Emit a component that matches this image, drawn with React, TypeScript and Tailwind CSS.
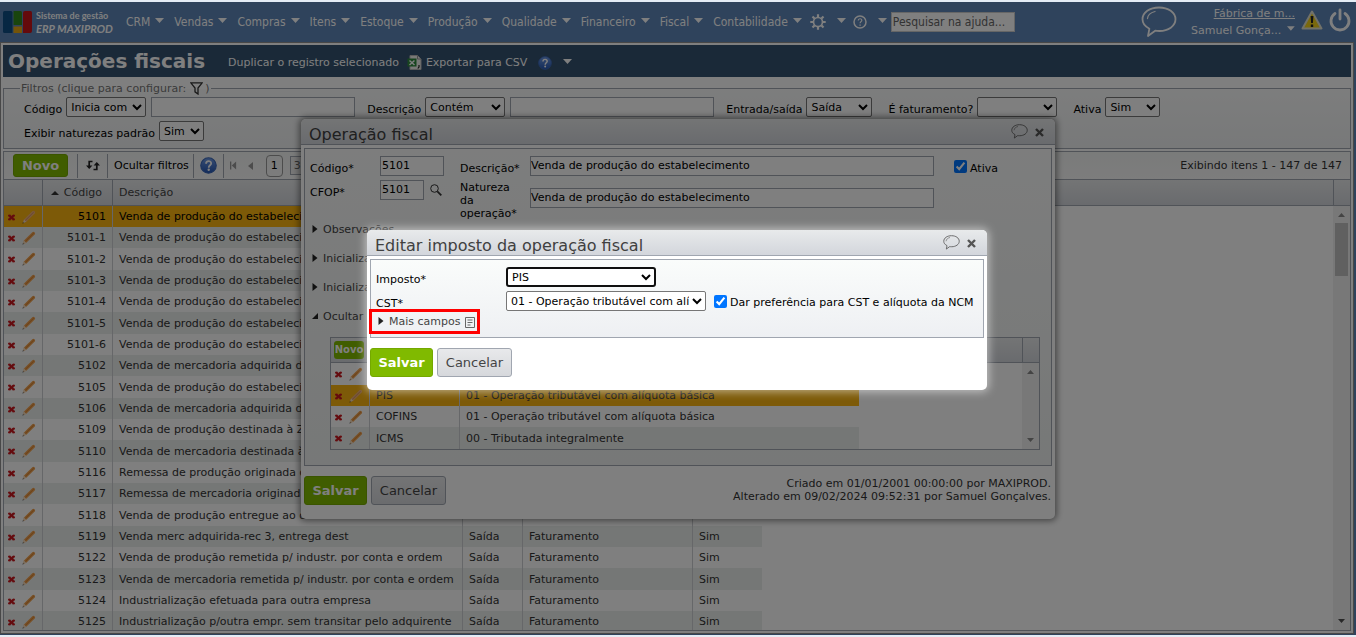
import React from "react";

const menus = ["CRM", "Vendas", "Compras", "Itens", "Estoque", "Produção", "Qualidade", "Financeiro", "Fiscal", "Contabilidade"];

const operations: [string, string][] = [
  ["5101", "Venda de produção do estabelecimento"],
  ["5101-1", "Venda de produção do estabelecimento"],
  ["5101-2", "Venda de produção do estabelecimento"],
  ["5101-3", "Venda de produção do estabelecimento"],
  ["5101-4", "Venda de produção do estabelecimento"],
  ["5101-5", "Venda de produção do estabelecimento"],
  ["5101-6", "Venda de produção do estabelecimento"],
  ["5102", "Venda de mercadoria adquirida de terceiros"],
  ["5105", "Venda de produção do estabelecimento"],
  ["5106", "Venda de mercadoria adquirida de terceiros"],
  ["5109", "Venda de produção destinada à Zona Franca"],
  ["5110", "Venda de mercadoria destinada à Zona Franca"],
  ["5116", "Remessa de produção originada de encomenda"],
  ["5117", "Remessa de mercadoria originada de encomenda"],
  ["5118", "Venda de produção entregue ao destinatário"],
  ["5119", "Venda merc adquirida-rec 3, entrega dest"],
  ["5122", "Venda de produção remetida p/ industr. por conta e ordem"],
  ["5123", "Venda de mercadoria remetida p/ industr. por conta e ordem"],
  ["5124", "Industrialização efetuada para outra empresa"],
  ["5125", "Industrialização p/outra empr. sem transitar pelo adquirente"],
];

const taxes: [string, string][] = [
  ["", ""],
  ["PIS", "01 - Operação tributável com alíquota básica"],
  ["COFINS", "01 - Operação tributável com alíquota básica"],
  ["ICMS", "00 - Tributada integralmente"],
];

const selectStyle = "h-5 rounded-[2px] border border-[#767676] bg-white text-black";
const inputStyle = "h-5 border border-[#a0a6b0] bg-white pb-px text-black outline-none";

function Caret({ className = "" }: { className?: string }) {
  return (
    <svg className={className} width="9" height="5" viewBox="0 0 9 5" aria-hidden="true">
      <path d="M0 0h9L4.5 5z" fill="currentColor" />
    </svg>
  );
}

function DeleteIcon() {
  return (
    <svg width="7" height="7" viewBox="0 0 7 7" aria-hidden="true">
      <path d="M0.5 1h1.7L3.5 2.3 4.8 1h1.7v1L5 3.5 6.5 5v1H4.8L3.5 4.8 2.2 6H0.5V5L2 3.5 0.5 2z" fill="#c9161d" stroke="#c9161d" strokeWidth="0.8" />
    </svg>
  );
}

function PencilIcon({ faded = false }: { faded?: boolean }) {
  return (
    <svg width="14" height="14" viewBox="0 0 14 14" aria-hidden="true">
      <path d="M2 9.5 10.3 1.2q1-1 2.2 0t.2 2.2L4.3 11.8 1.2 13z" fill={faded ? "#f2b277" : "#f0a04c"} />
      <path d="M3.2 10.6 11.8 2" stroke={faded ? "#d98f5a" : "#d07f34"} strokeWidth="0.9" />
      <path d="M2 9.6 4.3 11.8 1 13z" fill="#f3dcc0" />
      <path d="M0.4 13.6l1.6-.5-1-.9z" fill="#333" />
    </svg>
  );
}

function Bubble({ className, strokeWidth = 1.2 }: { className: string; strokeWidth?: number }) {
  return (
    <svg className={className} viewBox="0 0 36 32" fill="none" stroke="currentColor" strokeWidth={strokeWidth} strokeLinejoin="round" aria-hidden="true">
      <path d="M18 1.5c9.3 0 16.5 5 16.5 11.8S27.3 25 18.5 25c-1.800 0-3 0-4.300-.3L7 30l1.400-7.300C4 20.500 1.500 17.300 1.500 13.300 1.500 6.500 8.700 1.500 18 1.500z" />
      <path d="M6.500 12.500c.3-3.500 3.500-6 7.500-7" strokeWidth={strokeWidth * 0.7} strokeLinecap="round" />
    </svg>
  );
}

function HelpOrb({ size }: { size: number }) {
  return (
    <svg width={size} height={size} viewBox="0 0 16 16" aria-hidden="true">
      <defs>
        <linearGradient id={"orb" + size} x1="0" y1="0" x2="0" y2="1">
          <stop offset="0" stopColor="#6f9be6" />
          <stop offset="1" stopColor="#2456b4" />
        </linearGradient>
      </defs>
      <circle cx="8" cy="8" r="7.300" fill={"url(#orb" + size + ")"} stroke="#3c68b8" />
      <path d="M5.700 6.300c0-3.200 4.800-3.200 4.800-.3C10.500 7.800 8.200 7.800 8.200 10" fill="none" stroke="#fff" strokeWidth="1.700" />
      <circle cx="8.200" cy="12" r="1.100" fill="#fff" />
    </svg>
  );
}

function Logo() {
  return (
    <svg width="30" height="22" viewBox="0 0 30 22" aria-hidden="true">
      <path d="M0 1.500Q0 0 1.500 0H8q1.500 0 1.500 1.500V22H1.500Q0 22 0 20.500z" fill="#0f4f86" />
      <path d="M10.500 0h7q1.500 0 1.500 1.500V14h-8.500z" fill="#338a1c" />
      <path d="M10.500 15.500H19V22h-8.500z" fill="#e8a812" />
      <path d="M20 2q0-2 2-2h5.500Q29 0 29 1.500V20q0 2-2 2h-7z" fill="#c81418" />
    </svg>
  );
}

function SaveCancel() {
  return (
    <div className="flex gap-1 text-[13px]">
      <button className="h-[29px] w-[63px] rounded-[3px] border border-[#74a800] bg-[#80ba00] font-bold text-white">Salvar</button>
      <button className="h-[29px] w-[75px] rounded-[3px] border border-[#a0a6b0] bg-linear-to-b from-[#e8e9eb] to-[#d6d8dc] text-[#444]">Cancelar</button>
    </div>
  );
}

function DialogTitle({ children }: { children: React.ReactNode }) {
  return (
    <div className="flex h-[26px] items-center border-b border-[#a0a6b0] bg-linear-to-b from-[#e8eaeb] to-[#d3d6dc] pr-[11px] pl-2">
      <h2 className="flex-1 pt-[6px] text-[16px] leading-5 text-[#404040]">{children}</h2>
      <button aria-label="Comentar" className="text-[#666]"><Bubble className="h-[15px] w-[17px]" strokeWidth={2} /></button>
      <button aria-label="Fechar" className="ml-[7px] pt-px">
        <svg width="9" height="9" viewBox="0 0 9 9" aria-hidden="true">
          <path d="M1 1l7 7M8 1L1 8" stroke="#555" strokeWidth="2.400" />
        </svg>
      </button>
    </div>
  );
}

function Disclosure({ label, open = false }: { label: string; open?: boolean }) {
  return (
    <button className="flex h-[18px] items-center gap-[5px] pl-[2px] text-[#444]">
      <svg width="6" height="8" viewBox="0 0 6 8" aria-hidden="true">
        <path d={open ? "M6 1v6H0z" : "M0.500 0l5 4-5 4z"} fill="#222" />
      </svg>
      <span className="pt-px">{label}</span>
    </button>
  );
}

function RowActions({ selected = false }: { selected?: boolean }) {
  return (
    <div className="flex items-center gap-[7px] pl-1">
      <button aria-label="Excluir" className="pt-px"><DeleteIcon /></button>
      <button aria-label="Editar"><PencilIcon faded={selected} /></button>
    </div>
  );
}

function AppHeader() {
  return (
    <header className="flex h-10 shrink-0 items-center pr-1 pl-[3px] text-white">
      <Logo />
      <div className="ml-[3px] w-[90px] font-['Lato',sans-serif] font-bold whitespace-nowrap">
        <div className="text-[9px] leading-3">Sistema de gestão</div>
        <div className="text-[11px] leading-[13px] italic">ERP MAXIPROD</div>
      </div>
      <nav className="flex items-center gap-[10px] font-['DejaVu_Sans_Condensed','DejaVu_Sans',sans-serif] text-[12px]">
        {menus.map((m) => (
          <button key={m} className="flex items-center gap-[5px]">
            {m}
            <Caret className="mb-1" />
          </button>
        ))}
      </nav>
      <button aria-label="Configurações" className="ml-2 flex items-center gap-[11px]">
        <svg width="16" height="16" viewBox="0 0 16 16" fill="none" stroke="currentColor" aria-hidden="true">
          <circle cx="8" cy="8" r="4.500" strokeWidth="1.700" />
          <path d="M8 .3v2.700M8 13v2.700M.3 8H3M13 8h2.700M2.500 2.500l2 2M11.500 11.500l2 2M13.500 2.500l-2 2M4.500 11.500l-2 2" strokeWidth="2.200" />
        </svg>
        <Caret className="mb-1" />
      </button>
      <button aria-label="Ajuda" className="ml-[7px] flex items-center gap-[11px]">
        <svg width="14" height="14" viewBox="0 0 14 14" fill="none" stroke="currentColor" aria-hidden="true">
          <circle cx="7" cy="7" r="6" strokeWidth="1.500" />
          <path d="M5.200 5.600c0-2.400 3.600-2.400 3.600-.3 0 1.300-1.700 1.400-1.700 3" strokeWidth="1.200" />
          <path d="M7.100 9.400v1.300" strokeWidth="1.300" />
        </svg>
        <Caret className="mb-1" />
      </button>
      <input aria-label="Pesquisar na ajuda" placeholder="Pesquisar na ajuda..." className="ml-1 h-5 w-[124px] border border-[#ccc] bg-white px-px font-['DejaVu_Sans_Condensed','DejaVu_Sans',sans-serif] text-[12px] text-[#555] placeholder:text-[#666]" />
      <div className="ml-auto flex items-center">
        <button aria-label="Mensagens"><Bubble className="h-8 w-9" strokeWidth={1.8} /></button>
        <div className="ml-[14px] w-[104px] text-right leading-[17px]">
          <a href="#empresa" className="block underline">Fábrica de m...</a>
          <button className="flex w-full items-center justify-end gap-[6px] whitespace-nowrap">Samuel Gonça... <Caret className="mb-1" /></button>
        </div>
        <svg className="mb-1 ml-[6px]" width="22" height="20" viewBox="0 0 22 20" aria-label="Aviso">
          <path d="M11 1.500 20.500 18.500h-19z" fill="#f4d21a" stroke="#e2e2d2" strokeWidth="2" strokeLinejoin="round" />
          <path d="M9.600 6h2.800l-.5 7h-1.800zM9.800 14.500h2.400v2.400H9.800z" fill="#222" />
        </svg>
        <button aria-label="Sair" className="mr-px mb-1 ml-[6px]">
          <svg width="22" height="24" viewBox="0 0 22 24" fill="none" stroke="currentColor" strokeWidth="2.800" strokeLinecap="round" aria-hidden="true">
            <path d="M11 2v9M6 5.500a9 9 0 1 0 10 0" />
          </svg>
        </button>
      </div>
    </header>
  );
}

function TitleBar() {
  return (
    <div className="flex h-8 shrink-0 items-center bg-[#345270] pl-[5px] text-white">
      <h1 className="text-[20px] leading-8 font-bold">Operações fiscais</h1>
      <a href="#duplicar" className="mt-[3px] ml-[23px]">Duplicar o registro selecionado</a>
      <button className="mt-[3px] ml-2 flex items-center gap-1">
        <svg width="15" height="15" viewBox="0 0 15 15" aria-hidden="true">
          <path d="M3 .5h7.500L14 4v10.500H3z" fill="#f4f4f0" stroke="#bbb" />
          <path d="M10.500.5V4H14" fill="none" stroke="#999" />
          <path d="M.5 3.500h9v8h-9z" fill="#2f8a3c" />
          <path d="M2.500 5.500l5 4.500M7.500 5.500l-5 4.500" stroke="#fff" strokeWidth="1.500" />
          <path d="M12 10v2l-1.200 1.500" fill="none" stroke="#222" strokeWidth="1.200" />
        </svg>
        Exportar para CSV
      </button>
      <button aria-label="Ajuda da página" className="mt-1 ml-[11px] flex items-center gap-[11px]">
        <HelpOrb size={14} />
        <Caret className="mb-1" />
      </button>
    </div>
  );
}

function FilterSelect({ id, label, value, width }: { id: string; label: string; value: string; width: string }) {
  return (
    <div className="flex items-end gap-1">
      <label htmlFor={id} className="leading-[15px]">{label}</label>
      <select id={id} className={selectStyle + " " + width}><option>{value}</option></select>
    </div>
  );
}

function Filters() {
  return (
    <fieldset className="mt-1 shrink-0 border border-[#a0a6b0] bg-linear-to-b from-[#fafbfb] to-[#f0f2f3] px-5 pt-[2px] pb-[7px] text-black">
      <legend className="-ml-1 flex h-[14px] items-center px-px leading-[14px] text-[#777]">
        <span className="pt-[2px]">Filtros (clique para configurar:</span>
        <button aria-label="Configurar filtros" className="mr-[2px] ml-1">
          <svg width="13" height="13" viewBox="0 0 13 13" fill="none" stroke="#333" strokeWidth="1.300" aria-hidden="true">
            <path d="M.8.800h11.400L8 6v6L5 9.800V6z" />
          </svg>
        </button>
        <span className="pt-[2px]">)</span>
      </legend>
      <div className="flex gap-3">
        <div className="flex items-end gap-[5px]">
          <FilterSelect id="f-codigo" label="Código" value="Inicia com" width="w-20" />
          <input aria-label="Valor do código" className={inputStyle + " w-[204px]"} />
        </div>
        <div className="flex items-end gap-[5px]">
          <FilterSelect id="f-descricao" label="Descrição" value="Contém" width="w-20" />
          <input aria-label="Valor da descrição" className={inputStyle + " w-[204px]"} />
        </div>
        <div className="flex gap-4">
          <FilterSelect id="f-es" label="Entrada/saída" value="Saída" width="w-[66px]" />
          <FilterSelect id="f-fat" label="É faturamento?" value="" width="w-20" />
          <FilterSelect id="f-ativa" label="Ativa" value="Sim" width="w-[55px]" />
        </div>
      </div>
      <div className="mt-1 flex">
        <FilterSelect id="f-padrao" label="Exibir naturezas padrão" value="Sim" width="w-[45px]" />
      </div>
    </fieldset>
  );
}

function ScrollTrack({ thumb = false }: { thumb?: boolean }) {
  return (
    <div className="flex w-[17px] shrink-0 flex-col items-center bg-[#f1f1f1] py-[7px]">
      <svg width="7" height="4" viewBox="0 0 7 4" aria-hidden="true"><path d="M0 4h7L3.500 0z" fill="#888" /></svg>
      {thumb && <div className="mt-[6px] h-[53px] w-[13px] bg-[#c1c1c1]" />}
      <svg className="mt-auto" width="7" height="4" viewBox="0 0 7 4" aria-hidden="true"><path d="M0 0h7L3.500 4z" fill={thumb ? "#505050" : "#888"} /></svg>
    </div>
  );
}

function OperationsGrid() {
  return (
    <section className="mt-[2px] flex min-h-0 flex-1 flex-col border border-[#a0a6b0] bg-white">
      <div className="flex h-[28px] shrink-0 items-center border-b border-[#a0a6b0] bg-linear-to-b from-[#f4f6f5] to-[#fafafa] pr-2 text-black">
        <button className="ml-[9px] h-[23px] w-[55px] rounded-[3px] border border-[#74a800] bg-[#80ba00] text-[13px] font-bold text-white">Novo</button>
        <div className="ml-[9px] flex h-6 w-[31px] items-center justify-center border-r border-l border-[#a0a6b0]">
          <button aria-label="Atualizar">
            <svg width="14" height="11" viewBox="0 0 14 11" aria-hidden="true">
              <path d="M6.500 1.500H3.200V8M7.500 9.500h3.300V3" fill="none" stroke="#222" strokeWidth="1.700" />
              <path d="M0 5.500h6.400L3.200 9zM7.600 5.500H14L10.800 2z" fill="#222" />
            </svg>
          </button>
        </div>
        <button className="h-6 border-r border-[#a0a6b0] pr-[4px] pl-[6px]">Ocultar filtros</button>
        <div className="flex h-6 w-[30px] items-center justify-center border-r border-[#a0a6b0]">
          <button aria-label="Ajuda da grade"><HelpOrb size={17} /></button>
        </div>
        <button aria-label="Primeira página" className="ml-[6px]">
          <svg width="7" height="9" viewBox="0 0 8 9" fill="#999" aria-hidden="true"><path d="M0 0h1.500v9H0zM7 0v9L2 4.500z" /></svg>
        </button>
        <button aria-label="Página anterior" className="ml-[11px]">
          <svg width="5" height="8" viewBox="0 0 5 8" fill="#999" aria-hidden="true"><path d="M5 0v8L0 4z" /></svg>
        </button>
        <span className="ml-[13px] flex h-[22px] w-[17px] items-center justify-center rounded-[4px] border border-[#999]">1</span>
        <input aria-label="Itens por página" readOnly value="3" className="ml-[7px] h-[19px] w-10 border border-[#a0a6b0] bg-[#eee] pl-[3px] text-[#666]" />
        <span className="ml-auto text-[#333]">Exibindo itens 1 - 147 de 147</span>
      </div>
      <div className="flex h-[26px] shrink-0 items-center border-b border-[#a0a6b0] bg-linear-to-b from-[#e8eaeb] to-[#d3d6dc] text-[#444]">
        <div className="h-full w-[39px] border-r border-[#a0a6b0]" />
        <div className="flex h-full w-[70px] items-center justify-end gap-[5px] border-r border-[#a0a6b0] pr-[10px]">
          <svg width="8" height="4" viewBox="0 0 8 4" aria-hidden="true"><path d="M0 4h8L4 0z" fill="#333" /></svg>
          Código
        </div>
        <div className="flex-1 pl-[6px]">Descrição</div>
        <div className="h-full w-[17px] border-l border-[#a0a6b0]" />
      </div>
      <div className="flex min-h-0 flex-1">
        <div className="min-w-0 flex-1 overflow-hidden">
          <table className="w-[758px] table-fixed border-separate border-spacing-0 text-[#333]">
            <colgroup>
              <col className="w-[39px]" /><col className="w-[70px]" /><col className="w-[350px]" />
              <col className="w-[60px]" /><col className="w-[170px]" /><col />
            </colgroup>
            <tbody>
              {operations.map(([code, description], i) => (
                <tr
                  key={code}
                  className={(i % 3 === 2 ? "h-[22px]" : "h-[21px]") + " " + (i === 0 ? "bg-[#fab410] text-black" : i % 2 ? "bg-[#ebeeed]" : "bg-white")}
                >
                  <td className="border-r border-[#ccced2] p-0"><RowActions selected={i === 0} /></td>
                  <td className="border-r border-[#ccced2] p-0 pt-px pr-[6px] text-right">{code}</td>
                  <td className="border-r border-[#ccced2] p-0 pt-px pl-[6px] whitespace-nowrap">{description}</td>
                  <td className="border-r border-[#ccced2] p-0 pt-px pl-[6px]">Saída</td>
                  <td className="border-r border-[#ccced2] p-0 pt-px pl-[6px]">Faturamento</td>
                  <td className="p-0 pt-px pl-[6px]">Sim</td>
                </tr>
              ))}
            </tbody>
          </table>
        </div>
        <ScrollTrack thumb />
      </div>
    </section>
  );
}

function OperationDialog() {
  return (
    <div role="dialog" aria-label="Operação fiscal" className="w-[754px] overflow-hidden rounded-[5px] bg-white shadow-[0_0_6px_2px_rgba(0,0,0,0.45)]">
      <DialogTitle>Operação fiscal</DialogTitle>
      <div className="px-[3px] pt-[3px] pb-[14px]">
        <div className="border border-[#a0a6b0] bg-linear-to-b from-[#fafbfb] to-[#eef1f0] px-[5px] pt-[7px] pb-[15px] text-black">
          <div className="grid grid-cols-[70px_80px_70px_424px_auto] gap-y-1">
            <label htmlFor="d-codigo" className="pt-[6px] leading-[14px]">Código*</label>
            <div><input id="d-codigo" defaultValue="5101" className={inputStyle + " block w-16 pl-px"} /></div>
            <label htmlFor="d-descricao" className="pt-[6px] leading-[14px]">Descrição*</label>
            <div><input id="d-descricao" defaultValue="Venda de produção do estabelecimento" className={inputStyle + " block w-[404px]"} /></div>
            <label className="flex h-5 items-center gap-[3px] pt-px"><input type="checkbox" defaultChecked className="size-[13px]" /><span className="pt-1">Ativa</span></label>
            <label htmlFor="d-cfop" className="pt-[6px]">CFOP*</label>
            <div className="flex h-5 items-center gap-[6px]">
              <input id="d-cfop" defaultValue="5101" className={inputStyle + " w-11 pl-px"} />
              <button aria-label="Buscar CFOP">
                <svg width="12" height="12" viewBox="0 0 12 12" fill="none" stroke="#333" aria-hidden="true">
                  <circle cx="4.500" cy="4.500" r="3.800" />
                  <path d="M7.300 7.300l4 4" strokeWidth="1.800" />
                </svg>
              </button>
            </div>
            <label htmlFor="d-natureza" className="pt-px leading-[13px]">Natureza<br />da<br />operação*</label>
            <div className="pt-2"><input id="d-natureza" defaultValue="Venda de produção do estabelecimento" className={inputStyle + " block w-[404px]"} /></div>
          </div>
          <div className="flex flex-col items-start gap-[11px]">
            <Disclosure label="Observações" />
            <Disclosure label="Inicializa" />
            <Disclosure label="Inicializa" />
            <Disclosure label="Ocultar i" open />
          </div>
          <div className="mt-3 mr-[6px] ml-[20px] border border-[#a0a6b0] bg-white">
            <div className="flex h-[25px] items-center border-b border-[#a0a6b0] bg-linear-to-b from-[#e8eaeb] to-[#d3d6dc]">
              <button className="ml-[3px] h-[18px] w-[30px] rounded-[3px] bg-[#80ba00] text-[10px] leading-[18px] font-bold text-white">Novo</button>
              <div className="ml-auto h-full w-[17px] border-l border-[#a0a6b0]" />
            </div>
            <div className="flex">
              <div className="flex-1">
                <table className="w-[528px] table-fixed border-separate border-spacing-0 text-[#333]">
                  <colgroup><col className="w-[39px]" /><col className="w-[90px]" /><col /></colgroup>
                  <tbody>
                    {taxes.map(([tax, cst], i) => (
                      <tr key={i} className={(i % 3 === 0 ? "h-[22px]" : "h-[21px]") + " " + (i === 1 ? "bg-[#fab410]" : i === 3 ? "bg-[#ebeeed]" : "bg-white")}>
                        <td className="border-r border-[#ccced2] p-0"><RowActions selected={i === 1} /></td>
                        <td className="border-r border-[#ccced2] p-0 pt-px pl-[6px]">{tax}</td>
                        <td className="p-0 pt-px pl-[6px]">{cst}</td>
                      </tr>
                    ))}
                  </tbody>
                </table>
              </div>
              <ScrollTrack />
            </div>
          </div>
        </div>
        <div className="mt-[10px] flex justify-between">
          <SaveCancel />
          <p className="pt-px pr-px text-right leading-[13px] text-[#333]">
            Criado em 01/01/2001 00:00:00 por MAXIPROD.<br />
            Alterado em 09/02/2024 09:52:31 por Samuel Gonçalves.
          </p>
        </div>
      </div>
    </div>
  );
}

function TaxDialog() {
  return (
    <div role="dialog" aria-modal="true" aria-label="Editar imposto da operação fiscal" className="w-[620px] rounded-[5px] bg-white shadow-[0_0_8px_2px_rgba(255,255,255,0.5)]">
      <div className="overflow-hidden rounded-t-[5px]"><DialogTitle>Editar imposto da operação fiscal</DialogTitle></div>
      <div className="px-[3px] pt-[3px] pb-[13px]">
        <div className="border border-[#a0a6b0] bg-linear-to-b from-[#fafcfb] to-[#eef0f3] px-[5px] pt-[7px] pb-1 text-black">
          <div className="grid grid-cols-[130px_1fr] gap-y-1">
            <label htmlFor="t-imposto" className="h-5 pt-[6px]">Imposto*</label>
            <div className="flex"><select id="t-imposto" className="h-5 w-[150px] rounded-[3px] border-2 border-[#101010] bg-white outline-none"><option>PIS</option></select></div>
            <label htmlFor="t-cst" className="h-5 pt-[6px]">CST*</label>
            <div className="flex h-5 items-center">
              <select id="t-cst" className={selectStyle + " w-[200px]"}><option>01 - Operação tributável com alíquota básica</option></select>
              <label className="ml-2 flex items-center gap-[3px]"><input type="checkbox" defaultChecked className="size-[13px]" /><span className="pt-1">Dar preferência para CST e alíquota da NCM</span></label>
            </div>
          </div>
          <div className="relative mb-[2px] flex h-5 items-center">
            <Disclosure label="Mais campos" />
            <svg className="mt-[3px] ml-[5px]" width="10" height="11" viewBox="0 0 10 11" fill="none" stroke="#666" aria-hidden="true">
              <path d="M.5.500h9v10h-9zM2.500 3h5M2.500 5.500h5M2.500 8h3" />
            </svg>
            <div className="absolute -top-[2px] -left-[7px] h-[25px] w-[111px] border-3 border-[#ff0000]" />
          </div>
        </div>
        <div className="mt-[10px]"><SaveCancel /></div>
      </div>
    </div>
  );
}

export default function App() {
  return (
    <div className="h-screen border-t-2 border-b-2 border-[#e4ecf5] font-['DejaVu_Sans','Verdana',sans-serif] text-[11px] leading-[14px]">
      <div className="relative flex h-full flex-col overflow-hidden bg-[#5e86b8]">
        <AppHeader />
        <main className="mr-[2px] mb-px flex min-h-0 flex-1 flex-col border border-[#909090] bg-white p-[2px]">
          <TitleBar />
          <Filters />
          <OperationsGrid />
        </main>
        <div className="absolute inset-x-0 top-[117px] flex justify-center"><OperationDialog /></div>
        <div className="absolute inset-0 bg-black/50" />
        <div className="absolute inset-x-0 top-[228px] flex justify-center pr-[2px]"><TaxDialog /></div>
      </div>
    </div>
  );
}
